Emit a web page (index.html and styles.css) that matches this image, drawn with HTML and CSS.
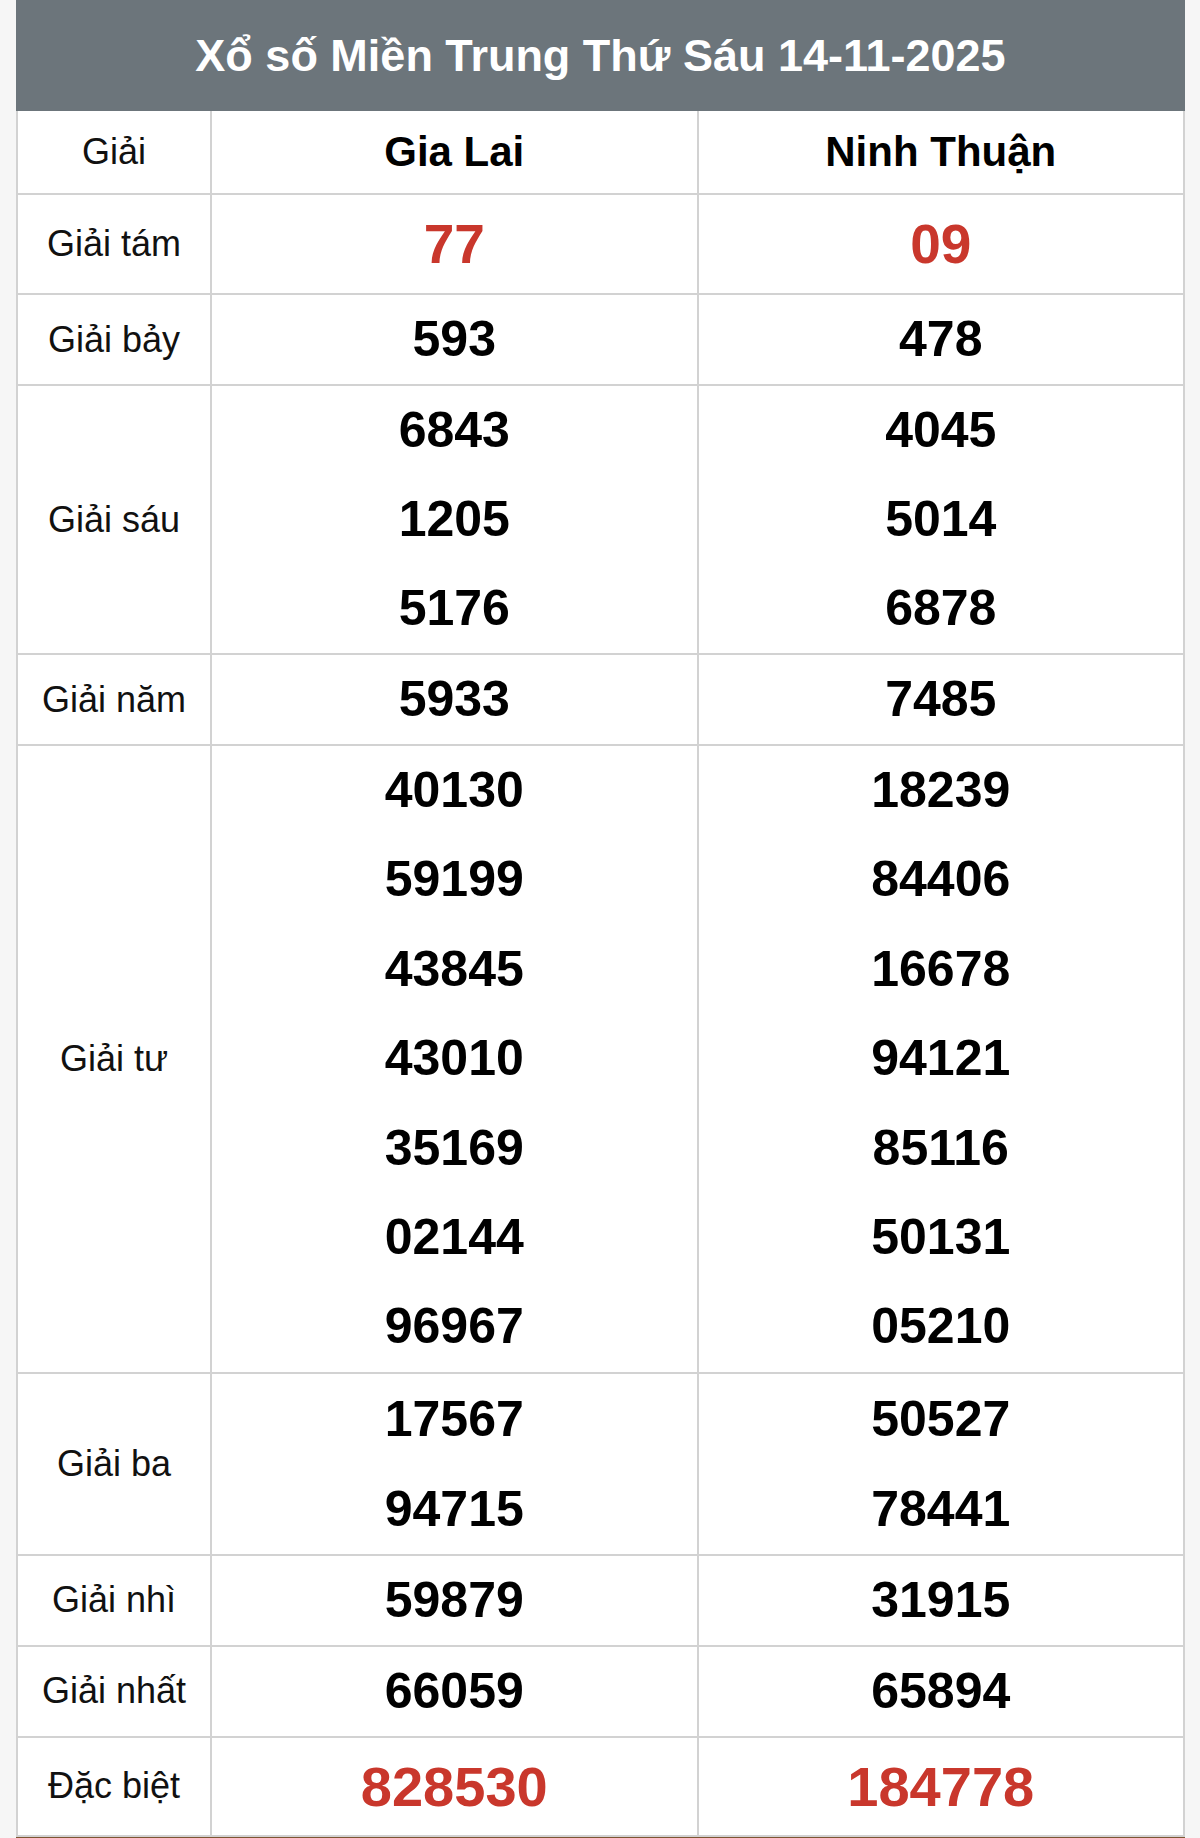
FILE: index.html
```html
<!DOCTYPE html>
<html lang="vi">
<head>
<meta charset="utf-8">
<title>Xổ số Miền Trung Thứ Sáu 14-11-2025</title>
<link rel="stylesheet" href="styles.css">
</head>
<body>
<div class="board">
  <div class="title">Xổ số Miền Trung Thứ Sáu 14-11-2025</div>
  <table class="results">
    <colgroup>
      <col class="c-label">
      <col class="c-prov">
      <col class="c-prov">
    </colgroup>
    <tr class="head">
      <td class="label">Giải</td>
      <th>Gia Lai</th>
      <th>Ninh Thuận</th>
    </tr>
    <tr class="r-tam">
      <td class="label">Giải tám</td>
      <td class="num red big"><div>77</div></td>
      <td class="num red big"><div>09</div></td>
    </tr>
    <tr>
      <td class="label">Giải bảy</td>
      <td class="num"><div>593</div></td>
      <td class="num"><div>478</div></td>
    </tr>
    <tr>
      <td class="label">Giải sáu</td>
      <td class="num"><div>6843</div><div>1205</div><div>5176</div></td>
      <td class="num"><div>4045</div><div>5014</div><div>6878</div></td>
    </tr>
    <tr>
      <td class="label">Giải năm</td>
      <td class="num"><div>5933</div></td>
      <td class="num"><div>7485</div></td>
    </tr>
    <tr class="r-tu">
      <td class="label">Giải tư</td>
      <td class="num"><div>40130</div><div>59199</div><div>43845</div><div>43010</div><div>35169</div><div>02144</div><div>96967</div></td>
      <td class="num"><div>18239</div><div>84406</div><div>16678</div><div>94121</div><div>85116</div><div>50131</div><div>05210</div></td>
    </tr>
    <tr class="r-ba">
      <td class="label">Giải ba</td>
      <td class="num"><div>17567</div><div>94715</div></td>
      <td class="num"><div>50527</div><div>78441</div></td>
    </tr>
    <tr>
      <td class="label">Giải nhì</td>
      <td class="num"><div>59879</div></td>
      <td class="num"><div>31915</div></td>
    </tr>
    <tr>
      <td class="label">Giải nhất</td>
      <td class="num"><div>66059</div></td>
      <td class="num"><div>65894</div></td>
    </tr>
    <tr class="r-db">
      <td class="label">Đặc biệt</td>
      <td class="num red huge"><div>828530</div></td>
      <td class="num red huge"><div>184778</div></td>
    </tr>
  </table>
</div>
</body>
</html>
```

FILE: styles.css
```css
html, body {
  margin: 0;
  padding: 0;
}

body {
  background: #f6f6f6;
  font-family: "Liberation Sans", Arial, Helvetica, sans-serif;
  color: #111;
}

.board {
  width: 1169px;
  margin-left: 16px;
  border-bottom: 3px solid #7d5532;
}

.title {
  height: 111px;
  background: #6c757b;
  color: #fff;
  font-weight: bold;
  font-size: 45px;
  display: flex;
  align-items: center;
  justify-content: center;
}

.results {
  width: 1169px;
  border-collapse: collapse;
  table-layout: fixed;
  background: #fff;
}

.c-label {
  width: 194px;
}

.results td,
.results th {
  border: 2px solid #d2d2d2;
  padding: 0;
  text-align: center;
  vertical-align: middle;
}

.results tr:first-child td,
.results tr:first-child th {
  border-top: none;
}

.head td,
.head th {
  height: 82px;
}

.head th {
  font-size: 42px;
  font-weight: bold;
  color: #000;
}

.label {
  font-size: 36px;
  color: #111;
}

.num div {
  height: 89px;
  line-height: 89px;
  font-size: 50px;
  font-weight: bold;
  color: #000;
}

.r-tu .num div {
  height: 89.4px;
  line-height: 89.4px;
}

.r-ba .num div {
  height: 90px;
  line-height: 90px;
}

.num.red div {
  color: #c9372c;
}

.num.big div {
  height: 98px;
  line-height: 98px;
  font-size: 55px;
}

.num.huge div {
  height: 97.5px;
  line-height: 97.5px;
  font-size: 56px;
}
```
